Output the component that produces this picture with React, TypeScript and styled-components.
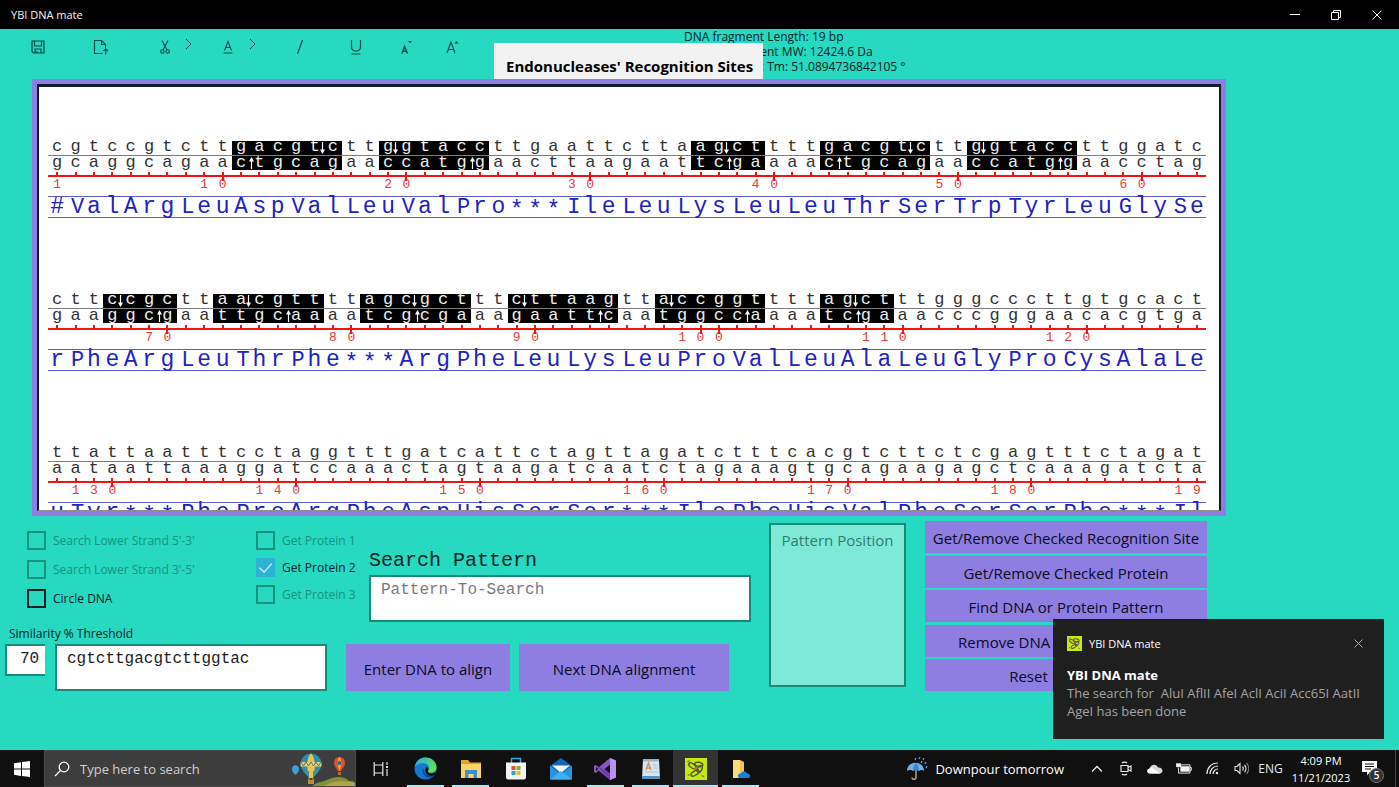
import React from "react";
import styled, { createGlobalStyle, css } from "styled-components";

const UI = `"Open Sans", "Noto Sans", sans-serif`;
const MONO = `"Liberation Mono", "DejaVu Sans Mono", monospace`;

const color = {
  teal: "#26d9c0",
  tealDark: "#178a79",
  tealMuted: "#17937f",
  purple: "#8f7ee2",
  ink: "#08211e",
  red: "#f01414",
  blue: "#2222c4",
};

const GlobalStyle = createGlobalStyle`
  *, *::before, *::after { box-sizing: border-box; }
  body { margin: 0; font-family: ${UI}; background: ${color.teal}; }
  button, input, textarea { font: inherit; margin: 0; }
`;

/* ---------- window frame ---------- */

const Window = styled.div`
  display: flex;
  flex-direction: column;
  height: 100vh;
  min-height: 560px;
  overflow: hidden;
  background: ${color.teal};
  color: ${color.ink};
  position: relative;
`;

const TitleBar = styled.header`
  display: flex;
  align-items: center;
  height: 29px;
  flex: none;
  padding: 0 2px 0 11px;
  background: #000;
  color: #f4f4f4;
  font-size: 11px;
`;

const TitleText = styled.span`
  flex: 1;
`;

const WindowButton = styled.button`
  width: 41px;
  height: 29px;
  padding: 0;
  border: 0;
  background: none;
  color: #fff;
  display: grid;
  place-items: center;
`;

const Toolbar = styled.div`
  display: flex;
  flex: none;
  height: 50px;
  padding-left: 26px;
  position: relative;
`;

const ToolButton = styled.button<{ $gap: number }>`
  width: 24px;
  height: 36px;
  padding: 0;
  margin-left: ${(p) => p.$gap}px;
  border: 0;
  background: none;
  color: #0d4a42;
  display: grid;
  place-items: center;
`;

const MoreButton = styled(ToolButton)`
  width: 16px;
  height: 30px;
`;

const Info = styled.div`
  margin-left: 220px;
  font-size: 12px;
  line-height: 15px;
  white-space: pre;
`;

const Flyout = styled.div`
  position: absolute;
  left: 494px;
  top: 14px;
  height: 36px;
  width: 269px;
  padding: 11px 0 0 12px;
  background: #f2f2f2;
  color: #000;
  font-weight: 700;
  font-size: 15px;
  line-height: 24px;
  white-space: nowrap;
  overflow: hidden;
`;

/* ---------- sequence viewer ---------- */

const Viewer = styled.main`
  flex: 1;
  min-height: 0;
  margin: 0 173px 0 32px;
  border: 5px solid ${color.purple};
  background: #fff;
  display: flex;
`;

const Page = styled.div`
  flex: 1;
  min-width: 0;
  border: 2px solid #101c2c;
  border-top-width: 3px;
  border-bottom: 1px solid #8b8f86;
  padding: 54px 13px 0 9px;
  overflow: hidden;
  font-family: ${MONO};
`;

const Block = styled.section`
  height: 153px;
`;

const Cells = styled.div`
  display: grid;
  grid-template-columns: repeat(63, 1fr);
  position: relative;
`;

const Base = styled.span<{ $cut: boolean }>`
  height: 14px;
  line-height: 12px;
  font-size: 17px;
  text-align: center;
  position: relative;
  color: ${(p) => (p.$cut ? "#eee" : "#333")};
  background: ${(p) => (p.$cut ? "#000" : "none")};
`;

const LowerBase = styled(Base)`
  line-height: 14px;
`;

const Upper = styled(Cells)`
  border-bottom: 1px solid #7c7c7c;
`;

const Arrow = styled.svg<{ $up: boolean }>`
  position: absolute;
  left: ${(p) => (p.$up ? -2 : -5)}px;
  top: 1px;
  width: 7px;
  height: 12px;
  z-index: 1;
`;

const Ruler = styled(Cells)`
  margin-top: 2px;
  height: 22px;
`;

const RulerCell = styled.span<{ $zero: boolean }>`
  border-bottom: 2px solid ${color.red};
  height: 5px;
  position: relative;
  text-align: center;
  color: #e53a3a;
  font-size: 13px;
  line-height: 14px;
  &::before {
    content: "";
    position: absolute;
    left: calc(50% - 1px);
    top: 0;
    width: ${(p) => (p.$zero ? 2 : 2)}px;
    height: ${(p) => (p.$zero ? 9 : 3)}px;
    background: ${color.red};
  }
`;

const Digit = styled.span`
  display: block;
  padding-top: 6px;
`;

const Protein = styled(Cells)`
  height: 22px;
  margin-top: 2px;
  border-top: 1px solid #5b5bd0;
  border-bottom: 1px solid #5b5bd0;
  color: ${color.blue};
  font-size: 23px;
  line-height: 21px;
`;

const Residue = styled.span<{ $kind: "star" | "cap" | "plain" }>`
  text-align: center;
  height: 20px;
  ${(p) =>
    p.$kind === "star" &&
    css`
      padding-top: 4px;
    `}
  ${(p) =>
    p.$kind === "cap" &&
    css`
      padding-left: 4px;
      font-size: 22px;
    `}
`;

/* ---------- controls ---------- */

const Controls = styled.div`
  flex: none;
  height: 234px;
  padding-top: 5px;
  display: flex;
  align-items: flex-start;
`;

const LeftPane = styled.div`
  width: 769px;
  flex: none;
`;

const TopRow = styled.div`
  display: flex;
  height: 104px;
  padding-left: 27px;
`;

const CheckColumn = styled.div<{ $width: number; $row: number; $pad: number }>`
  width: ${(p) => p.$width}px;
  padding-top: ${(p) => p.$pad}px;
  display: grid;
  grid-auto-rows: ${(p) => p.$row}px;
  align-content: start;
`;

const CheckLabel = styled.label<{ $off?: boolean }>`
  display: flex;
  align-items: center;
  gap: 7px;
  font-size: 12px;
  white-space: nowrap;
  color: ${(p) => (p.$off ? color.tealMuted : color.ink)};
`;

const CheckBox = styled.input`
  appearance: none;
  width: 19px;
  height: 19px;
  border: 2px solid ${color.ink};
  position: relative;
  &:disabled {
    border-color: ${color.tealMuted};
  }
  &:checked {
    border: 0;
    background: #2cb4d2;
  }
  &:checked::after {
    content: "";
    position: absolute;
    left: 6px;
    top: 2px;
    width: 7px;
    height: 12px;
    border: solid #fff;
    border-width: 0 1px 1px 0;
    transform: rotate(42deg);
  }
`;

const PatternField = styled.label`
  display: block;
  flex: none;
  width: 382px;
  padding-top: 26px;
  font-family: ${MONO};
  font-size: 20px;
  line-height: 28px;
`;

const field = css`
  display: block;
  border: 2px solid ${color.tealDark};
  border-radius: 0;
  background: #fff;
  color: #222;
  font-family: ${MONO};
  font-size: 16px;
  line-height: 20px;
  resize: none;
  outline: 0;
  overflow: hidden;
  &::placeholder {
    color: #7b7b7b;
    opacity: 1;
  }
`;

const TextArea = styled.textarea`
  ${field}
  width: 100%;
  height: 47px;
  padding: 3px 10px;
`;

const SimilarityLabel = styled.label`
  display: block;
  padding-left: 9px;
  font-size: 12px;
  line-height: 17px;
  height: 19px;
`;

const AlignRow = styled.div`
  display: flex;
  align-items: flex-start;
  padding-left: 5px;
`;

const Threshold = styled.input`
  ${field}
  width: 40px;
  height: 32px;
  border-right: 0;
  padding: 0 5px 3px 13px;
`;

const DnaBox = styled.div`
  width: 272px;
  margin: 0 19px 0 10px;
`;

const Action = styled.button`
  border: 0;
  padding: 0;
  background: ${color.purple};
  color: #0a0a1e;
  font-size: 15px;
  white-space: nowrap;
`;

const AlignButton = styled(Action)<{ $width: number }>`
  width: ${(p) => p.$width}px;
  height: 47px;
  margin-right: 9px;
  padding-top: 2px;
`;

const Position = styled.textarea`
  ${field}
  width: 137px;
  height: 164px;
  margin: 2px 19px 0 0;
  padding: 4px 0;
  flex: none;
  background: #7fe9d8;
  font-family: ${UI};
  font-size: 15px;
  text-align: center;
  line-height: 22px;
  &::placeholder {
    color: #2f7c70;
  }
`;

const ActionList = styled.div`
  width: 282px;
  height: 170px;
  display: flex;
  flex-direction: column;
  justify-content: space-between;

  ${Action} {
    height: 32px;
    padding-top: 2px;
  }
`;

/* ---------- toast ---------- */

const Toast = styled.aside`
  position: absolute;
  right: 15px;
  bottom: 48px;
  width: 331px;
  height: 120px;
  padding: 15px 14px;
  background: #1f1f1f;
  color: #fff;
  font-size: 13px;
  line-height: 18px;
`;

const ToastHead = styled.div`
  display: flex;
  align-items: center;
  gap: 7px;
  height: 19px;
  margin-bottom: 13px;
  font-size: 11px;
`;

const ToastClose = styled.button`
  margin-left: auto;
  width: 24px;
  height: 18px;
  padding: 0;
  border: 0;
  background: none;
  color: #a8a8a8;
`;

const ToastTitle = styled.strong`
  display: block;
`;

const ToastText = styled.p`
  margin: 0;
  color: #a4a4a4;
  white-space: pre-line;
`;

/* ---------- taskbar ---------- */

const Taskbar = styled.footer`
  flex: none;
  height: 37px;
  display: flex;
  align-items: stretch;
  background: #101010;
  color: #fff;
`;

const Start = styled.button`
  width: 44px;
  border: 0;
  padding: 0;
  background: none;
  display: grid;
  place-items: center;
`;

const Search = styled.label`
  width: 312px;
  background: #3d3d3d;
  border: 1px solid #4c4c4c;
  display: flex;
  align-items: center;
  padding-left: 9px;
  overflow: hidden;
`;

const SearchInput = styled.input`
  flex: 1;
  min-width: 0;
  border: 0;
  outline: 0;
  padding: 0 0 0 10px;
  background: none;
  color: #fff;
  font-size: 13px;
  &::placeholder {
    color: #d0d0d0;
    opacity: 1;
  }
`;

const TaskButton = styled.button<{ $line?: boolean; $active?: boolean }>`
  width: 45px;
  border: 0;
  padding: 0;
  position: relative;
  background: ${(p) => (p.$active ? "#333" : "none")};
  display: grid;
  place-items: center;
  &::after {
    content: "";
    display: ${(p) => (p.$line ? "block" : "none")};
    position: absolute;
    left: ${(p) => (p.$active ? 0 : 4)}px;
    right: ${(p) => (p.$active ? 0 : 4)}px;
    bottom: 0;
    height: 2px;
    background: #a4ecf0;
  }
`;

const Tasks = styled.nav`
  display: flex;
  flex: 1;
  padding-left: 2px;
`;

const Weather = styled.button`
  display: flex;
  align-items: center;
  gap: 7px;
  border: 0;
  padding: 0;
  margin-right: 18px;
  background: none;
  color: #fff;
  font-size: 13px;
  white-space: nowrap;
`;

const TrayButton = styled.button`
  width: 29px;
  border: 0;
  padding: 0;
  background: none;
  color: #e8e8e8;
  display: grid;
  place-items: center;
  font-size: 12px;
`;

const Clock = styled.time`
  width: 66px;
  margin-left: 3px;
  text-align: center;
  font-size: 11px;
  line-height: 17px;
  padding-top: 2px;
`;

const Notices = styled.button`
  width: 42px;
  border: 0;
  border-right: 1px solid #444;
  padding: 0 10px 0 0;
  margin-right: 3px;
  background: none;
  color: #fff;
  position: relative;
  display: grid;
  place-items: center;
`;

const NoticeCount = styled.span`
  position: absolute;
  right: 11px;
  bottom: 4px;
  width: 15px;
  height: 15px;
  border-radius: 8px;
  border: 1px solid #777;
  background: #333;
  font-size: 10px;
  line-height: 13px;
  font-weight: 600;
`;

/* ---------- data ---------- */

type Strand = {
  start: number;
  bases: string;
  sites: [number, number][];
  down: number[];
  up: number[];
  protein: string;
};

const strands: Strand[] = [
  {
    start: 1,
    bases: "cgtccgtcttgacgtcttggtaccttgaattcttaagcttttgacgtcttggtaccttggatc",
    sites: [[10, 16], [18, 24], [35, 39], [42, 48], [50, 56]],
    down: [15, 19, 37, 47, 51],
    up: [11, 23, 37, 43, 55],
    protein: "#ValArgLeuAspValLeuValPro***IleLeuLysLeuLeuThrSerTrpTyrLeuGlySe",
  },
  {
    start: 64,
    bases: "cttccgcttaacgttttagcgctttcttaagttaccggttttagctttgggcccttgtgcact",
    sites: [[3, 7], [9, 15], [17, 23], [25, 31], [33, 39], [42, 46]],
    down: [4, 11, 20, 26, 34, 44],
    up: [6, 13, 20, 30, 38, 44],
    protein: "rPheArgLeuThrPhe***ArgPheLeuLysLeuProValLeuAlaLeuGlyProCysAlaLe",
  },
  {
    start: 127,
    bases: "ttattaatttcctaggtttgatcattctagttagatctttcacgtcttctcgagtttctagat",
    sites: [],
    down: [],
    up: [],
    protein: "uTyr***PheProArgPheAspHisSerSer***IlePheHisValPheSerSerPhe***Il",
  },
];

const pair: Record<string, string> = { a: "t", t: "a", c: "g", g: "c" };

function rulerMarks(start: number, length: number): string[] {
  const marks = Array<string>(length).fill("");
  if (start === 1) marks[0] = "1";
  for (let n = 10; n <= start + length + 2; n += 10) {
    const digits = String(n);
    [...digits].forEach((d, j) => {
      const at = n - start - (digits.length - 1) + j;
      if (at >= 0 && at < length) marks[at] = d;
    });
  }
  return marks;
}

function residueKind(r: string): "star" | "cap" | "plain" {
  if (r === "*") return "star";
  return /[B-Z]/.test(r) ? "cap" : "plain";
}

const CutArrow = ({ up = false }: { up?: boolean }) => (
  <Arrow $up={up} viewBox="0 0 7 12" aria-hidden="true">
    <g transform={up ? "rotate(180 3.5 6)" : undefined}>
      <path d="M3.5 0V9" stroke="#fff" strokeWidth="1.2" />
      <path d="M1 7.5h5L3.500 12z" fill="#fff" />
    </g>
  </Arrow>
);

const StrandBlock = ({ s }: { s: Strand }) => {
  const cut = (i: number) => s.sites.some(([a, b]) => i >= a && i < b);
  return (
    <Block>
      <Upper>
        {[...s.bases].map((b, i) => (
          <Base key={i} $cut={cut(i)}>
            {b}
            {s.down.includes(i) && <CutArrow />}
          </Base>
        ))}
      </Upper>
      <Cells>
        {[...s.bases].map((b, i) => (
          <LowerBase key={i} $cut={cut(i)}>
            {pair[b]}
            {s.up.includes(i) && <CutArrow up />}
          </LowerBase>
        ))}
      </Cells>
      <Ruler>
        {rulerMarks(s.start, s.bases.length).map((d, i) => (
          <RulerCell key={i} $zero={d === "0"}>
            <Digit>{d}</Digit>
          </RulerCell>
        ))}
      </Ruler>
      <Protein>
        {[...s.protein].map((r, i) => (
          <Residue key={i} $kind={residueKind(r)}>{r}</Residue>
        ))}
      </Protein>
    </Block>
  );
};

/* ---------- icons ---------- */

const Line = ({ w = 16, h = 16, sw = 1, children }: { w?: number; h?: number; sw?: number; children: React.ReactNode }) => (
  <svg width={w} height={h} viewBox={`0 0 ${w} ${h}`} fill="none" stroke="currentColor" strokeWidth={sw} aria-hidden="true">
    {children}
  </svg>
);

const SaveIcon = () => (
  <Line w={14} h={14} sw={1.2}>
    <path d="M1 1h12v12H2.500L1 11.500zM3.500 1v5h7V1M4 13V9h6v4M6 13v-2" />
  </Line>
);
const ExportIcon = () => (
  <Line w={16} h={16} sw={1.1}>
    <path d="M9.500 14.500h-8v-13h7l4 4V9M8.500 1.500v4h4M12.800 15.500V10M10.500 12l2.300-2.300L15 12" />
  </Line>
);
const CutIcon = () => (
  <Line w={10} h={14} sw={1.1}>
    <path d="M2 .5L7 10M8 .5L3 10" />
    <circle cx="2.300" cy="11.500" r="1.700" />
    <circle cx="7.700" cy="11.500" r="1.700" />
  </Line>
);
const MoreIcon = () => (
  <Line w={7} h={12}>
    <path d="M1 1l5 5-5 5" />
  </Line>
);
const FontColorIcon = () => (
  <Line w={10} h={14} sw={1.1}>
    <path d="M1.500 10.500L5 1.500l3.500 9M2.600 7.500h4.800M.5 13h9" />
  </Line>
);
const ItalicIcon = () => (
  <Line w={6} h={14} sw={1.2}>
    <path d="M5.500 0L.5 14" />
  </Line>
);
const UnderlineIcon = () => (
  <Line w={12} h={16} sw={1.2}>
    <path d="M1.500 1v6.500c0 6 9 6 9 0V1M1.500 15h9" />
  </Line>
);
const ShrinkIcon = () => (
  <Line w={12} h={15} sw={1.4}>
    <path d="M2 13.500l2.700-7 2.700 7M3 11.300h3.400" />
    <path d="M8 1h4L10 3.500z" fill="currentColor" stroke="none" />
  </Line>
);
const GrowIcon = () => (
  <Line w={13} h={14} sw={1.1}>
    <path d="M1 13L5 2l4 11M2.300 9.500h5.400" />
    <path d="M8.500 3.500h4L10.500 1z" fill="currentColor" stroke="none" />
  </Line>
);

const AppIcon = ({ size }: { size: number }) => (
  <svg width={size} height={size} viewBox="0 0 24 24" aria-hidden="true">
    <rect width="24" height="24" fill="#c4ea12" />
    <g fill="none" stroke="#55553a" strokeWidth="1.600">
      <ellipse cx="8" cy="8.500" rx="4.500" ry="2.300" transform="rotate(35 8 8.500)" />
      <ellipse cx="15" cy="7" rx="4.500" ry="2.300" transform="rotate(10 15 7)" />
      <ellipse cx="16" cy="12" rx="4" ry="2.300" transform="rotate(-60 16 12)" />
      <ellipse cx="11" cy="16.500" rx="5" ry="2.300" transform="rotate(-30 11 16.500)" />
    </g>
    <path d="M10 12l4-2" stroke="#d2691e" strokeWidth="1.600" />
    <path d="M2.500 4l3-1M18 19l3 1.500M3 19l2-1" stroke="#8a7a2c" strokeWidth="1.400" />
  </svg>
);

const WindowsIcon = () => (
  <svg width="16" height="16" viewBox="0 0 16 16" fill="#fff" aria-hidden="true">
    <path d="M0 2.300L7 1.200v6.400H0zM8 1l8-1v7.600H8zM0 8.500h7v6.400L0 13.800zM8 8.500h8V16l-8-1.100z" />
  </svg>
);

const SearchIcon = () => (
  <Line w={16} h={16} sw={1.300}>
    <circle cx="10" cy="6" r="4.800" />
    <path d="M6.500 9.500L1 15" />
  </Line>
);

const Balloons = () => (
  <svg width="66" height="36" viewBox="-3 0 66 36" aria-hidden="true">
    <path d="M19 36c5-5 10-5 16-7 8-4 18-4 22 1 5 0 8 2 9 6z" fill="#7f8f3a" />
    <path d="M30 36c8-4 14-7 30-5 3 1 5 3 6 5z" fill="#b3a24a" />
    <path d="M0 18c0-5 7-5 7 0 0 3-2 4-3.500 6C2 22 0 21 0 18z" fill="#3aa0dc" />
    <circle cx="19" cy="13" r="10.500" fill="#2c8fae" />
    <path d="M19 2.500c-4 3-5 15-2 22h4c3-7 2-19-2-22z" fill="#ecc24c" />
    <path d="M8.600 11h20.800v4.500H8.600z" fill="#f0d06a" />
    <path d="M9 11l2.500 4 2.500-4 2.500 4 2.500-4 2.500 4 2.500-4 2.500 4 2.500-4" stroke="#55707a" fill="none" />
    <path d="M11 20h16l-6 7h-4z" fill="#3b93a4" />
    <path d="M17 20h4v7h-4z" fill="#ecc24c" />
    <path d="M17 27v3M21 27v3" stroke="#c9a050" />
    <rect x="16" y="29" width="6" height="4" fill="#b98f3a" />
    <path d="M42 12c0-8 11-8 11 0 0 4-3 5-4 8h-3c-1-3-4-4-4-8z" fill="#dd4f36" />
    <path d="M47.500 6c-3 3-2 10 0 14 2-4 3-11 0-14z" fill="#f0a13c" />
    <circle cx="47.500" cy="12" r="2" fill="#36658a" />
    <rect x="46" y="21" width="3" height="3" fill="#a57434" />
  </svg>
);

const TaskViewIcon = () => (
  <svg width="16" height="16" viewBox="0 0 16 16" fill="none" stroke="#e6e6e6" strokeWidth="1.200" aria-hidden="true">
    <path d="M1.200 1v3h8.600V1M1.200 15v-3h8.600v3M1.200 4v8M9.800 4v8M14 1v3M14 8v7" />
    <path d="M13 6h2" strokeWidth="2" />
  </svg>
);

const EdgeIcon = () => (
  <svg width="23" height="23" viewBox="0 0 24 24" aria-hidden="true">
    <defs>
      <linearGradient id="edgeTop" x1="0" y1="0" x2="1" y2="0.500">
        <stop offset="0" stopColor="#2aa7e8" />
        <stop offset="1" stopColor="#5fe05a" />
      </linearGradient>
    </defs>
    <circle cx="12" cy="12" r="11.500" fill="#1477d2" />
    <path d="M.7 11C1.500 5 6 .5 12 .5c7 0 11.500 5 11.500 10 0 4-3 6-6 6-2 0-3-1-3-2s1-1.500 1-3.500c0-3-3-4.500-6-4.500-4 0-8 2-8.800 4.500z" fill="url(#edgeTop)" />
    <path d="M9 12c-1 6 3 10.500 9 9.500 1.500-.3 3-1.500 4-3-4 2-12 2-12-6z" fill="#0c4a93" />
    <path d="M14.500 14.500c0 3.500 6 3 8.500.5-.5 2-1.200 3.400-2 4.300-7 2-11-3-8.500-8.300 2-1 3.500 1.500 2 3.500z" fill="#101010" />
  </svg>
);

const ExplorerIcon = () => (
  <svg width="22" height="20" viewBox="0 0 22 20" aria-hidden="true">
    <path d="M1 1h7l2 2.500h11V8H1z" fill="#e2a32a" />
    <rect x="1" y="5" width="20" height="14" fill="#fcd462" />
    <path d="M5 19v-8h12v8h-3.500v-4h-5v4z" fill="#3b8fd4" />
  </svg>
);

const StoreIcon = () => (
  <svg width="22" height="23" viewBox="0 0 22 23" aria-hidden="true">
    <path d="M6.500 6V1.500h9V6" fill="none" stroke="#3aa9dd" strokeWidth="1.500" />
    <path d="M1 5.500h20V20q0 2.500-2.500 2.500h-15Q1 22.500 1 20z" fill="#f3f3f3" />
    <path d="M6.500 9h4v4h-4z" fill="#e8512c" />
    <path d="M11.500 9h4v4h-4z" fill="#76b82a" />
    <path d="M6.500 14h4v4h-4z" fill="#2a9fe0" />
    <path d="M11.500 14h4v4h-4z" fill="#f6b71c" />
  </svg>
);

const MailIcon = () => (
  <svg width="22" height="22" viewBox="0 0 22 22" aria-hidden="true">
    <path d="M0 8L11 0l11 8v13H0z" fill="#0f68b8" />
    <path d="M2 7.500h18L11 15z" fill="#f5f5f5" />
    <path d="M0 8l11 8 11-8v13.500H0z" fill="#2a93e0" />
    <path d="M0 21.500L11 13l11 8.500z" fill="#3fb0f2" />
  </svg>
);

const StudioIcon = () => (
  <svg width="23" height="22" viewBox="0 0 23 22" aria-hidden="true">
    <path d="M16 0l6 2.500v17L16 22 4.500 12.500 2 15 0 14V8l2-1 2.500 2.500z" fill="#8a55c4" />
    <path d="M16 6.500v9L10.500 11zM2 9v4l2.200-2z" fill="#101010" />
    <path d="M16 0l6 2.500v17L16 22z" fill="#b892ec" />
    <path d="M2 7l14 15v-6.500z" fill="#6d3bab" />
  </svg>
);

const DocIcon = () => (
  <svg width="20" height="22" viewBox="0 0 20 22" aria-hidden="true">
    <path d="M2 1h16l1 20H1z" fill="#d7e6f2" />
    <path d="M2 1h16v2.500H2z" fill="#8fb3d0" />
    <path d="M5 12l2.500-7L10 12M6 10h3" fill="none" stroke="#e08a3c" strokeWidth="1.300" />
    <path d="M12 7h5M12 10h5M4 14h13" stroke="#a9c4da" />
    <path d="M1 18h18v3H1z" fill="#5c8fbd" />
  </svg>
);

const CloudFolderIcon = () => (
  <svg width="20" height="20" viewBox="0 0 20 20" aria-hidden="true">
    <path d="M2 1h7l4 2v16H2z" fill="#f5c54a" />
    <path d="M2 1h7v18H2z" fill="#fbdc82" />
    <path d="M8 19c-2.500-3 0-5 2-4.500 1-3 5-3 6 0 3-.5 4 3 2 4.500z" fill="#1c7fd6" />
  </svg>
);

const UmbrellaIcon = () => (
  <svg width="22" height="24" viewBox="0 0 22 24" aria-hidden="true">
    <path d="M10 8v12c0 3-4 3-4 .5" fill="none" stroke="#b8a48c" strokeWidth="1.500" />
    <path d="M1 14C1 3 18 3 18 14c-1-1.500-4-1.500-5 0-1-1.500-5-1.500-6 0-1-1.500-5-1.500-6 0z" fill="#6bb2ee" />
    <path d="M7 14c0-4 1-6 3-8 2 2 3 4 3 8-1-1.500-5-1.500-6 0z" fill="#3f86d0" />
    <path d="M10 1l-1 2M14 0l-1 2M18 1l-1 2M16 4l-1 2M20 5l-1 2M21 9l-1 2" stroke="#4aa3f0" strokeWidth="1.200" />
  </svg>
);

const ChevronUp = () => (
  <Line w={12} h={8} sw={1.300}>
    <path d="M1 6.500l5-5 5 5" />
  </Line>
);
const CameraIcon = () => (
  <Line w={12} h={15} sw={1.200}>
    <path d="M1 4.500h7v6H1zM8 6.500l3-1.500v5L8 8.500M2 2c1-1.200 4-1.200 5 0M2 13c1 1.200 4 1.200 5 0" />
  </Line>
);
const CloudIcon = () => (
  <svg width="16" height="10" viewBox="0 0 16 10" aria-hidden="true">
    <path d="M3 9.500C-.5 9.500-.5 5 2.500 4.700 3.500 0 9.500-.5 11 3.500c5-.5 6 5.500 2 6z" fill="#d8d8d8" />
    <path d="M2.500 4.700c3-1.500 5 .5 11 4.800H3C-.5 9.500-.5 5 2.500 4.700z" fill="#fff" />
  </svg>
);
const BatteryIcon = () => (
  <svg width="16" height="11" viewBox="0 0 17 12" aria-hidden="true">
    <path d="M4.500 3.500h10v6h-10z" fill="#f2f2f2" />
    <path d="M5.500 2h9.500v9H2.500V5M15 5h1.500v3H15" fill="none" stroke="#f2f2f2" />
    <path d="M0 1h5v3H0zM1 0v1M4 0v1" fill="#f2f2f2" stroke="#f2f2f2" />
  </svg>
);
const WifiIcon = () => (
  <Line w={13} h={13} sw={1.200}>
    <path d="M1 12C1 6 5 1 12 1M4 12c0-4 3-8 8-8M7 12c0-2.500 2-5 5-5" />
    <circle cx="11" cy="11" r="1.200" fill="currentColor" stroke="none" />
  </Line>
);
const VolumeIcon = () => (
  <Line w={15} h={13} sw={1.100}>
    <path d="M1 4.500h2L6 1.500v10L3 8.500H1zM8.500 4.500c1 1 1 3 0 4M10.500 3c2 2 2 5 0 7" />
    <path d="M12.500 1c3 3 3 8 0 11" opacity="0.5" />
  </Line>
);
const NoticeIcon = () => (
  <svg width="16" height="16" viewBox="0 0 16 16" aria-hidden="true">
    <path d="M0 0h15v11H8l-3 3.500V11H0z" fill="#fff" />
    <path d="M3 3h9M3 5.500h9M3 8h6" stroke="#101010" />
  </svg>
);

/* ---------- app ---------- */

const actions = [
  "Get/Remove Checked Recognition Site",
  "Get/Remove Checked Protein",
  "Find DNA or Protein Pattern",
  "Remove DNA Pattern Markings",
  "Reset DNA Mate",
];

const Check = ({ label, off, on }: { label: string; off?: boolean; on?: boolean }) => (
  <CheckLabel $off={off}>
    <CheckBox type="checkbox" disabled={off} defaultChecked={on} />
    {label}
  </CheckLabel>
);

export default function App() {
  return (
    <Window>
      <GlobalStyle />
      <TitleBar>
        <TitleText>YBI DNA mate</TitleText>
        <WindowButton aria-label="Minimize">
          <Line w={10} h={10}><path d="M0 4.500h10" /></Line>
        </WindowButton>
        <WindowButton aria-label="Restore">
          <Line w={10} h={10}><path d="M.5 2.500h7v7h-7zM2.500 2.500v-2h7v7h-2" /></Line>
        </WindowButton>
        <WindowButton aria-label="Close">
          <Line w={10} h={10}><path d="M.5.5l9 9M9.500.5l-9 9" /></Line>
        </WindowButton>
      </TitleBar>

      <Toolbar>
        <ToolButton $gap={0} aria-label="Save"><SaveIcon /></ToolButton>
        <ToolButton $gap={39} aria-label="Export"><ExportIcon /></ToolButton>
        <ToolButton $gap={40} aria-label="Cut"><CutIcon /></ToolButton>
        <MoreButton $gap={3} aria-label="More cut options"><MoreIcon /></MoreButton>
        <ToolButton $gap={20} aria-label="Font color"><FontColorIcon /></ToolButton>
        <MoreButton $gap={4} aria-label="More font colors"><MoreIcon /></MoreButton>
        <ToolButton $gap={28} aria-label="Italic"><ItalicIcon /></ToolButton>
        <ToolButton $gap={32} aria-label="Underline"><UnderlineIcon /></ToolButton>
        <ToolButton $gap={26} aria-label="Shrink font"><ShrinkIcon /></ToolButton>
        <ToolButton $gap={22} aria-label="Grow font"><GrowIcon /></ToolButton>
        <Info>
          <div>DNA fragment Length: 19 bp</div>
          <div>ssDNA  fragment MW: 12424.6 Da</div>
          <div>DNA segment: Tm: 51.0894736842105 °</div>
        </Info>
        <Flyout>Endonucleases' Recognition Sites</Flyout>
      </Toolbar>

      <Viewer>
        <Page>
          {strands.map((s) => (
            <StrandBlock key={s.start} s={s} />
          ))}
        </Page>
      </Viewer>

      <Controls>
        <LeftPane>
          <TopRow>
            <CheckColumn $width={229} $row={29} $pad={5}>
              <Check label="Search Lower Strand 5'-3'" off />
              <Check label="Search Lower Strand 3'-5'" off />
              <Check label="Circle DNA" />
            </CheckColumn>
            <CheckColumn $width={113} $row={27} $pad={6}>
              <Check label="Get Protein 1" off />
              <Check label="Get Protein 2" on />
              <Check label="Get Protein 3" off />
            </CheckColumn>
            <PatternField>
              Search Pattern
              <TextArea placeholder="Pattern-To-Search" />
            </PatternField>
          </TopRow>
          <SimilarityLabel htmlFor="threshold">Similarity % Threshold</SimilarityLabel>
          <AlignRow>
            <Threshold id="threshold" type="text" defaultValue="70" />
            <DnaBox>
              <TextArea aria-label="DNA to align" defaultValue="cgtcttgacgtcttggtac" spellCheck={false} />
            </DnaBox>
            <AlignButton $width={164}>Enter DNA to align</AlignButton>
            <AlignButton $width={210}>Next DNA alignment</AlignButton>
          </AlignRow>
        </LeftPane>
        <Position aria-label="Pattern position" placeholder="Pattern Position" readOnly />
        <ActionList>
          {actions.map((a) => (
            <Action key={a}>{a}</Action>
          ))}
        </ActionList>
      </Controls>

      <Toast role="status">
        <ToastHead>
          <AppIcon size={15} />
          YBI DNA mate
          <ToastClose aria-label="Dismiss">
            <Line w={9} h={9}><path d="M.5.5l8 8M8.500.5l-8 8" /></Line>
          </ToastClose>
        </ToastHead>
        <ToastTitle>YBI DNA mate</ToastTitle>
        <ToastText>{"The search for \u00a0AluI AflII AfeI AclI AciI Acc65I AatII\nAgeI has been done"}</ToastText>
      </Toast>

      <Taskbar>
        <Start aria-label="Start"><WindowsIcon /></Start>
        <Search>
          <SearchIcon />
          <SearchInput type="text" placeholder="Type here to search" aria-label="Search" />
          <Balloons />
        </Search>
        <Tasks>
          <TaskButton aria-label="Task view"><TaskViewIcon /></TaskButton>
          <TaskButton $line aria-label="Edge"><EdgeIcon /></TaskButton>
          <TaskButton $line aria-label="File Explorer"><ExplorerIcon /></TaskButton>
          <TaskButton aria-label="Store"><StoreIcon /></TaskButton>
          <TaskButton aria-label="Mail"><MailIcon /></TaskButton>
          <TaskButton $line aria-label="Visual Studio"><StudioIcon /></TaskButton>
          <TaskButton $line aria-label="WordPad"><DocIcon /></TaskButton>
          <TaskButton $line $active aria-label="YBI DNA mate"><AppIcon size={22} /></TaskButton>
          <TaskButton $line aria-label="OneDrive folder"><CloudFolderIcon /></TaskButton>
        </Tasks>
        <Weather>
          <UmbrellaIcon />
          Downpour tomorrow
        </Weather>
        <TrayButton aria-label="Hidden icons"><ChevronUp /></TrayButton>
        <TrayButton aria-label="Meet now"><CameraIcon /></TrayButton>
        <TrayButton aria-label="OneDrive"><CloudIcon /></TrayButton>
        <TrayButton aria-label="Battery"><BatteryIcon /></TrayButton>
        <TrayButton aria-label="Network"><WifiIcon /></TrayButton>
        <TrayButton aria-label="Volume"><VolumeIcon /></TrayButton>
        <TrayButton aria-label="Language">ENG</TrayButton>
        <Clock>4:09 PM<br />11/21/2023</Clock>
        <Notices aria-label="Notifications">
          <NoticeIcon />
          <NoticeCount>5</NoticeCount>
        </Notices>
      </Taskbar>
    </Window>
  );
}
